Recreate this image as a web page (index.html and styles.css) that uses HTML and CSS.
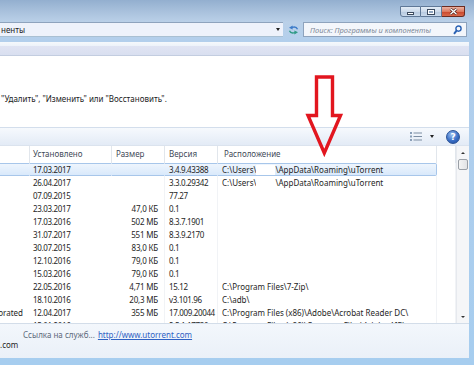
FILE: index.html
```html
<!DOCTYPE html>
<html lang="ru">
<head>
    <meta charset="UTF-8">
    <title>Программы и компоненты</title>
    <link rel="stylesheet" href="styles.css">
</head>
<body>
    <div class="window">
        <div class="titlebar">
            <div class="caption-buttons">
                <span class="cap-btn cap-min"><i></i></span>
                <span class="cap-btn cap-max"><i></i></span>
                <span class="cap-btn cap-close">
                    <svg width="9" height="7" viewBox="0 0 9 7"><path d="M1.5 0.8 L7.5 6.2 M7.5 0.8 L1.5 6.2" stroke="#3a1510" stroke-width="2.6"/><path d="M1.5 0.8 L7.5 6.2 M7.5 0.8 L1.5 6.2" stroke="#fff" stroke-width="1.4"/></svg>
                </span>
            </div>
        </div>

        <div class="navbar">
            <div class="address">
                <span class="crumb">ненты</span>
                <span class="addr-drop"></span>
            </div>
            <div class="refresh">
                <svg width="11" height="10" viewBox="0 0 11 10">
                    <path d="M9.5 4.2 C8.8 2.2 6.5 1.6 4 2.4" fill="none" stroke="#3d7cc9" stroke-width="1.3"/>
                    <path d="M1 2.8 L4.6 0.4 L4.6 4.6 Z" fill="#3d7cc9"/>
                    <path d="M1.5 5.8 C2.2 7.8 4.5 8.4 7 7.6" fill="none" stroke="#2f9a86" stroke-width="1.3"/>
                    <path d="M10 7.2 L6.4 9.6 L6.4 5.4 Z" fill="#2f9a86"/>
                </svg>
            </div>
            <div class="search">
                <span class="search-hint">Поиск: Программы и компоненты</span>
                <svg width="9" height="10" viewBox="0 0 9 10">
                    <circle cx="5.5" cy="3.6" r="2.6" fill="none" stroke="#2a62b4" stroke-width="1.4"/>
                    <path d="M3.6 5.6 L1 8.8" stroke="#2a62b4" stroke-width="2"/>
                </svg>
            </div>
        </div>

        <div class="main">
            <div class="commandbar"></div>

            <div class="intro">
                <p>"Удалить", "Изменить" или "Восстановить".</p>
            </div>

            <div class="toolbar">
                <svg class="view-icon" width="12" height="9" viewBox="0 0 12 9">
                    <rect x="0" y="0" width="2" height="2" fill="#8a9fb8"/>
                    <rect x="0" y="3.5" width="2" height="2" fill="#8a9fb8"/>
                    <rect x="0" y="7" width="2" height="2" fill="#8a9fb8"/>
                    <path d="M3.5 1 H12 M3.5 4.5 H12 M3.5 8 H12" stroke="#7d8ea3" stroke-width="1"/>
                </svg>
                <span class="caret"></span>
                <span class="help">?</span>
            </div>

            <div class="list">
                <div class="grid">
                    <div class="row head">
                        <span class="cell"></span>
                        <span class="cell">Установлено</span>
                        <span class="cell">Размер</span>
                        <span class="cell">Версия</span>
                        <span class="cell">Расположение</span>
                        <span class="cell"></span>
                    </div>
                    <div class="row sel">
                        <span class="cell name"></span>
                        <span class="cell num">17.03.2017</span>
                        <span class="cell size"></span>
                        <span class="cell num ver">3.4.9.43388</span>
                        <span class="cell loc">C:\Users\<span class="redact"></span>\AppData\Roaming\uTorrent</span>
                        <span class="cell fill"></span>
                    </div>
                    <div class="row">
                        <span class="cell name"></span>
                        <span class="cell num">26.04.2017</span>
                        <span class="cell size"></span>
                        <span class="cell num ver">3.3.0.29342</span>
                        <span class="cell loc">C:\Users\<span class="redact"></span>\AppData\Roaming\uTorrent</span>
                        <span class="cell fill"></span>
                    </div>
                    <div class="row">
                        <span class="cell name"></span>
                        <span class="cell num">07.09.2015</span>
                        <span class="cell size"></span>
                        <span class="cell num ver">77.27</span>
                        <span class="cell loc"></span>
                        <span class="cell fill"></span>
                    </div>
                    <div class="row">
                        <span class="cell name"></span>
                        <span class="cell num">23.03.2017</span>
                        <span class="cell size">47,0 КБ</span>
                        <span class="cell num ver">0.1</span>
                        <span class="cell loc"></span>
                        <span class="cell fill"></span>
                    </div>
                    <div class="row">
                        <span class="cell name"></span>
                        <span class="cell num">17.03.2016</span>
                        <span class="cell size">502 МБ</span>
                        <span class="cell num ver">8.3.7.1901</span>
                        <span class="cell loc"></span>
                        <span class="cell fill"></span>
                    </div>
                    <div class="row">
                        <span class="cell name"></span>
                        <span class="cell num">31.07.2017</span>
                        <span class="cell size">551 МБ</span>
                        <span class="cell num ver">8.3.9.2170</span>
                        <span class="cell loc"></span>
                        <span class="cell fill"></span>
                    </div>
                    <div class="row">
                        <span class="cell name"></span>
                        <span class="cell num">30.07.2015</span>
                        <span class="cell size">83,0 КБ</span>
                        <span class="cell num ver">0.1</span>
                        <span class="cell loc"></span>
                        <span class="cell fill"></span>
                    </div>
                    <div class="row">
                        <span class="cell name"></span>
                        <span class="cell num">12.10.2016</span>
                        <span class="cell size">79,0 КБ</span>
                        <span class="cell num ver">0.1</span>
                        <span class="cell loc"></span>
                        <span class="cell fill"></span>
                    </div>
                    <div class="row">
                        <span class="cell name"></span>
                        <span class="cell num">15.03.2016</span>
                        <span class="cell size">79,0 КБ</span>
                        <span class="cell num ver">0.1</span>
                        <span class="cell loc"></span>
                        <span class="cell fill"></span>
                    </div>
                    <div class="row">
                        <span class="cell name"></span>
                        <span class="cell num">22.05.2016</span>
                        <span class="cell size">4,71 МБ</span>
                        <span class="cell num ver">15.12</span>
                        <span class="cell loc">C:\Program Files\7-Zip\</span>
                        <span class="cell fill"></span>
                    </div>
                    <div class="row">
                        <span class="cell name"></span>
                        <span class="cell num">18.10.2016</span>
                        <span class="cell size">20,3 МБ</span>
                        <span class="cell num ver">v3.101.96</span>
                        <span class="cell loc">C:\adb\</span>
                        <span class="cell fill"></span>
                    </div>
                    <div class="row">
                        <span class="cell name"><span>Incorporated</span></span>
                        <span class="cell num">12.04.2017</span>
                        <span class="cell size">355 МБ</span>
                        <span class="cell num ver">17.009.20044</span>
                        <span class="cell loc">C:\Program Files (x86)\Adobe\Acrobat Reader DC\</span>
                        <span class="cell fill"></span>
                    </div>
                    <div class="row">
                        <span class="cell name"></span>
                        <span class="cell num">15.01.2016</span>
                        <span class="cell size"></span>
                        <span class="cell num ver">2.5.1.17730</span>
                        <span class="cell loc">C:\Program Files (x86)\Common Files\Adobe AIR\</span>
                        <span class="cell fill"></span>
                    </div>
                </div>
                <div class="scrollbar">
                    <span class="sb-btn"><span class="sb-up"></span></span>
                    <span class="sb-thumb"></span>
                    <span class="sb-track"></span>
                    <span class="sb-btn"><span class="sb-down"></span></span>
                </div>
            </div>

            <div class="details">
                <p class="detail-line"><span class="detail-label">Ссылка на служб...</span><a class="detail-link" href="#">http://www.utorrent.com</a></p>
                <p class="detail-line">.com</p>
            </div>
        </div>

        <!-- red annotation arrow drawn over the window -->
        <svg class="annotation" width="474" height="365" viewBox="0 0 474 365">
            <path d="M316.5 77 H332.5 V115.5 H340.5 L324.3 153 L308 115.5 H316.5 Z" fill="none" stroke="#e2161f" stroke-width="3.4" stroke-linejoin="miter"/>
        </svg>
    </div>
</body>
</html>
```

FILE: styles.css
```css
* {
    margin: 0;
    padding: 0;
    box-sizing: border-box;
}

body {
    width: 474px;
    height: 365px;
    overflow: hidden;
    font-family: "Noto Sans", "Open Sans", sans-serif;
    font-size: 8px;
    color: #1e1e1e;
}

.window {
    position: relative;
    height: 365px;
    display: flex;
    flex-direction: column;
    background: linear-gradient(#93afcf 0, #aac2dd 12px, #bad0e8 22px, #b3cfec 40px, #a6cdef 100%);
}

/* title bar */

.titlebar {
    height: 22px;
    display: flex;
    justify-content: flex-end;
    padding: 6px 9px 0 0;
}

.caption-buttons {
    display: flex;
    height: 11px;
}

.cap-btn {
    width: 21px;
    height: 11px;
    display: flex;
    align-items: center;
    justify-content: center;
    border: 1px solid #5f7897;
    border-left: none;
    background: linear-gradient(#e4edf7, #cbd9ea 50%, #b5c8df 51%, #c9d9eb);
}

.cap-min {
    border-left: 1px solid #5f7897;
    border-radius: 0 0 0 3px;
}

.cap-min i {
    display: block;
    width: 7px;
    height: 3px;
    margin-top: 3px;
    background: #fff;
    border: 1px solid #3b4a5e;
}

.cap-max i {
    display: block;
    width: 8px;
    height: 6px;
    border: 1px solid #3b4a5e;
    box-shadow: inset 0 0 0 1px #fff;
    background: #8ea4bf;
}

.cap-close {
    width: 23px;
    border-color: #6b2b20;
    border-radius: 0 0 3px 0;
    background: linear-gradient(#eab2a3, #dc7a60 50%, #c8452a 51%, #d9694b);
}

/* address + search */

.navbar {
    height: 15px;
    display: flex;
    padding-right: 7px;
    margin-bottom: 5px;
}

.address {
    flex: 1;
    display: flex;
    align-items: center;
    justify-content: space-between;
    padding: 0 3px 0 1px;
    background: #eef2fb;
    border-top: 1px solid #8ea3bd;
    border-bottom: 1px solid #a9c0d3;
}

.crumb {
    color: #1b1b1b;
}

.addr-drop {
    width: 0;
    height: 0;
    border-left: 2.5px solid transparent;
    border-right: 2.5px solid transparent;
    border-top: 3px solid #222;
}

.refresh {
    width: 20px;
    display: flex;
    align-items: center;
    justify-content: center;
}

.search {
    width: 164px;
    display: flex;
    align-items: center;
    justify-content: space-between;
    padding: 0 4px 0 6px;
    background: #f3f6fb;
    border: 1px solid #8ea3bd;
}

.search-hint {
    font-style: italic;
    font-size: 7.5px;
    color: #7f8a99;
}

/* main pane */

.main {
    flex: 1;
    display: flex;
    flex-direction: column;
    margin: 0 5px 7px 0;
    background: #fff;
}

.commandbar {
    height: 14px;
    background: linear-gradient(#f5f8fc 0, #eef3fa 28%, #e0e4f3 32%, #d9dff0 100%);
    border-bottom: 1px solid #c3cde0;
}

.intro {
    height: 71px;
    padding: 37px 0 0 1px;
    line-height: 12px;
    color: #222;
}

.toolbar {
    height: 19px;
    display: flex;
    align-items: center;
    justify-content: flex-end;
    padding-right: 9px;
    border-top: 1px solid #d3deec;
    border-bottom: 1px solid #dbe3ee;
    background: linear-gradient(#f6f9fd, #e3ebf6);
}

.view-icon {
    margin-right: 8px;
}

.caret {
    width: 0;
    height: 0;
    margin-right: 12px;
    border-left: 2.5px solid transparent;
    border-right: 2.5px solid transparent;
    border-top: 3px solid #222;
}

.help {
    width: 14px;
    height: 14px;
    border-radius: 50%;
    display: flex;
    align-items: center;
    justify-content: center;
    font-family: "DejaVu Sans", sans-serif;
    font-weight: bold;
    font-size: 9px;
    color: #fff;
    background: radial-gradient(circle at 40% 30%, #9cc0f0, #3a6fc6 55%, #1d4a9c);
    border: 1px solid #2a5296;
}

/* list */

.list {
    height: 177px;
    display: flex;
    overflow: hidden;
}

.grid {
    width: 459px;
    height: 177px;
    margin-left: -3px;
    overflow: hidden;
}

.row {
    display: grid;
    grid-template-columns: 33px 82px 53px 53px 219px 19px;
    height: 13px;
    line-height: 13px;
    white-space: nowrap;
}

.row .cell {
    overflow: hidden;
    border-right: 1px solid #f1f3f6;
}

.row .cell:nth-child(1),
.row .cell:nth-child(2) {
    border-right-color: transparent;
}

.head {
    height: 17px;
    line-height: 16px;
    color: #3f4a58;
}

.head .cell {
    padding-left: 4px;
    border-right: 1px solid #e1e6ec;
}

.head .cell:nth-child(1),
.head .cell:nth-child(2) {
    border-right-color: #e1e6ec;
}

.head .cell:nth-child(2) {
    padding-left: 3px;
}

.head .cell:nth-child(5) {
    padding-left: 6px;
}

.name {
    display: flex;
    justify-content: flex-end;
    padding-right: 6px;
}

.num {
    padding-left: 3px;
    letter-spacing: -0.35px;
}

.ver {
    padding-left: 4px;
}

.size {
    text-align: right;
    padding-right: 6px;
    letter-spacing: -0.2px;
}

.loc {
    padding-left: 4px;
}

.redact {
    display: inline-block;
    width: 19px;
    height: 11px;
    vertical-align: middle;
    background: #fff;
}

.sel .cell:not(.fill) {
    background: linear-gradient(#eef5fd, #d9e9fb);
    border-top: 1px solid #a7c6ea;
    border-bottom: 1px solid #a7c6ea;
    border-right-color: transparent;
    line-height: 11px;
}

.sel .loc {
    border-right: 1px solid #a7c6ea !important;
    border-radius: 0 2px 2px 0;
}

/* scrollbar */

.scrollbar {
    width: 13px;
    display: flex;
    flex-direction: column;
    align-items: center;
    background: #f5f6f8;
    border-left: 1px solid #e6e9ee;
}

.sb-btn {
    height: 13px;
    width: 100%;
    display: flex;
    align-items: center;
    justify-content: center;
}

.sb-up,
.sb-down {
    width: 0;
    height: 0;
    border-left: 2px solid transparent;
    border-right: 2px solid transparent;
}

.sb-up {
    border-bottom: 2.5px solid #333;
}

.sb-down {
    border-top: 2.5px solid #333;
}

.sb-thumb {
    width: 10px;
    height: 11px;
    border: 1px solid #9a9fa6;
    border-radius: 2px;
    background: linear-gradient(90deg, #f4f4f4, #e2e3e5);
}

.sb-track {
    flex: 1;
}

/* details pane */

.details {
    flex: 1;
    padding-top: 6px;
    border-top: 1px solid #d3dde9;
    background: linear-gradient(#f3f7fc, #eaf0f8);
}

.detail-line {
    line-height: 10px;
    white-space: nowrap;
}

.detail-label {
    margin-left: 23px;
    margin-right: 3px;
    color: #5d6a7b;
}

.detail-link {
    color: #2f62c4;
    text-decoration: underline;
}

.annotation {
    position: absolute;
    left: 0;
    top: 0;
    pointer-events: none;
}
```
